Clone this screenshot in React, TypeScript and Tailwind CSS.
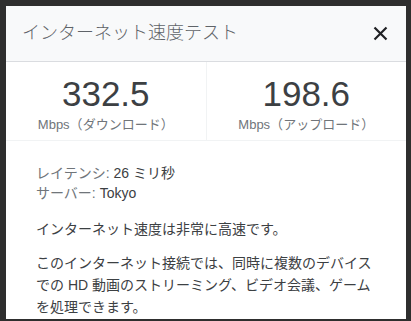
const font = {
  fontFamily: '"Liberation Sans", Arial, "Noto Sans CJK JP", sans-serif',
};

const SpeedBox = ({ value, label }: { value: string; label: string }) => (
  <div className="flex flex-1 flex-col items-center pt-[12px]">
    <div className="text-[35px] leading-[40px] text-[#3c4043]">{value}</div>
    <div className="mt-[3px] text-[13px] leading-[16px] text-[#70757a]">
      Mbps（{label}）
    </div>
  </div>
);

const App = () => {
  return (
    <div
      className="flex h-[321px] w-[411px] flex-col bg-[#2e2e2e] pb-[2px] pl-[6px] pr-[5px] pt-[6px]"
      style={font}
    >
      <div className="flex flex-1 flex-col overflow-hidden bg-white">
        <div className="flex h-[56px] items-center justify-between border-b border-[#dadce0] bg-[#f8f9fa] pl-[16px] pr-[18px]">
          <h1 className="text-[18px] font-light text-[#5f6368]">
            インターネット速度テスト
          </h1>
          <svg width="15" height="15" viewBox="0 0 15 15" className="text-[#202124]">
            <path d="M1.5 1.5 L13.5 13.5 M13.5 1.5 L1.5 13.5" stroke="currentColor" strokeWidth="2.2" />
          </svg>
        </div>
        <div className="flex h-[79px] border-b border-[#f1f3f4]">
          <SpeedBox value="332.5" label="ダウンロード" />
          <div className="w-px bg-[#f1f3f4]" />
          <SpeedBox value="198.6" label="アップロード" />
        </div>
        <div className="px-[30px] pt-[22px] text-[14px] text-[#3c4043]">
          <div className="leading-[20px]">
            <span className="text-[#70757a]">レイテンシ:</span> 26 ミリ秒
          </div>
          <div className="leading-[20px]">
            <span className="text-[#70757a]">サーバー:</span> Tokyo
          </div>
          <p className="mt-[16px] leading-[20px]">インターネット速度は非常に高速です。</p>
          <p className="mt-[13px] leading-[22px]">
            このインターネット接続では、同時に複数のデバイス
            <br />
            での HD 動画のストリーミング、ビデオ会議、ゲーム
            <br />
            を処理できます。
          </p>
        </div>
      </div>
    </div>
  );
};

export default App;
